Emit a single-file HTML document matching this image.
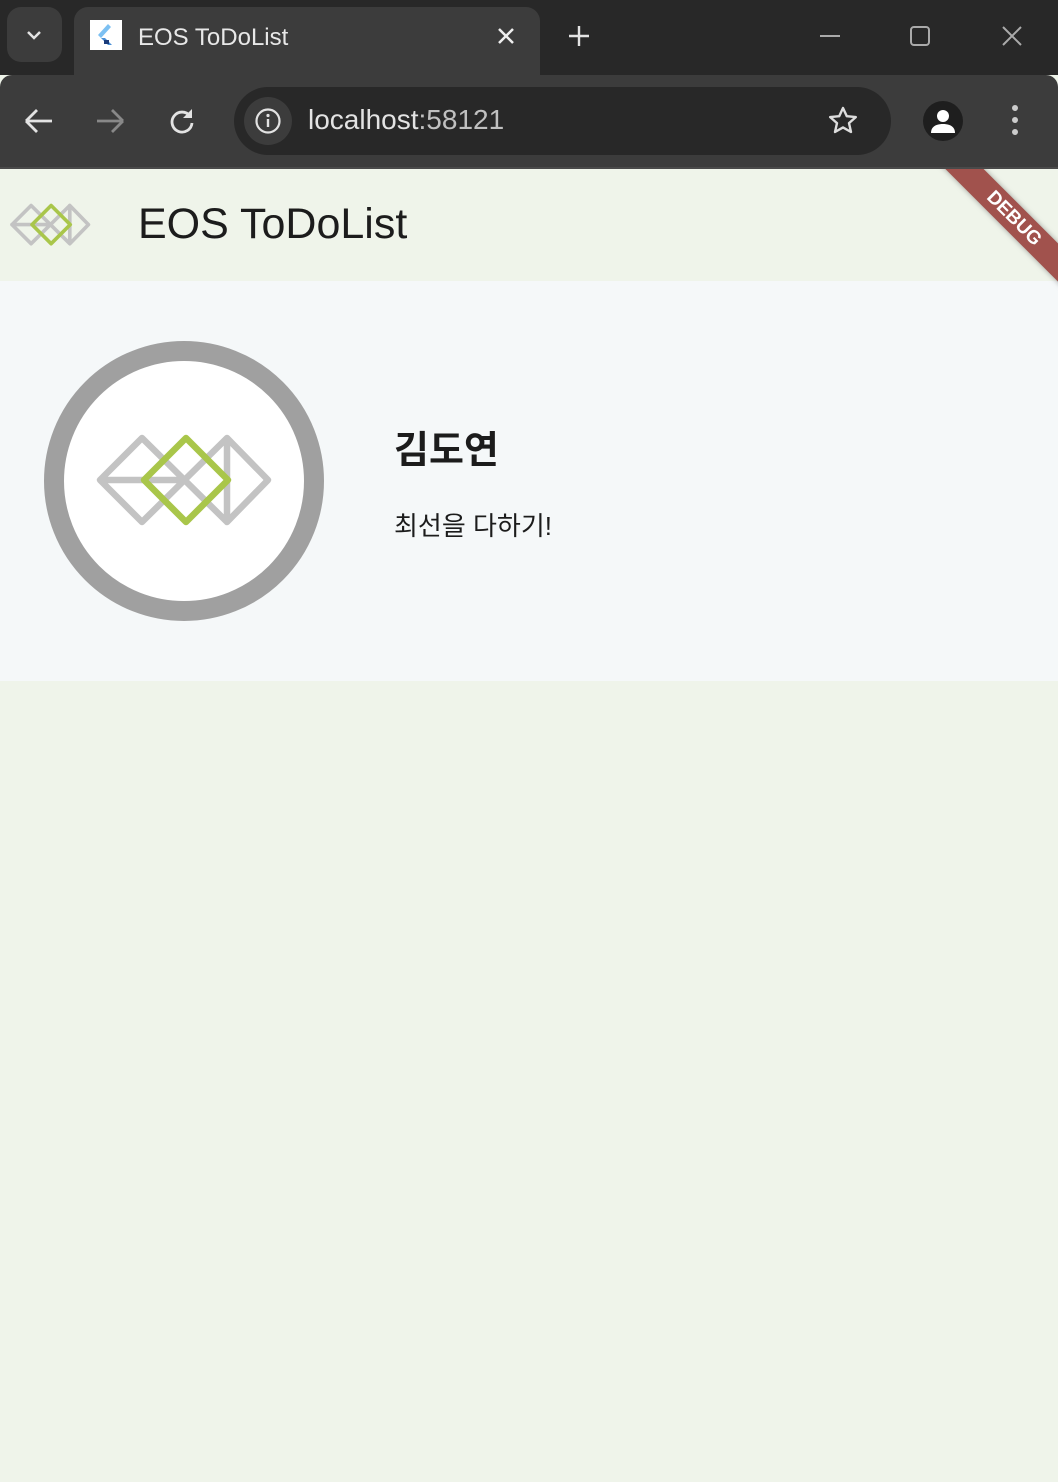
<!DOCTYPE html>
<html><head><meta charset="utf-8">
<style>
*{margin:0;padding:0;box-sizing:border-box}
body{width:1058px;height:1482px;overflow:hidden;background:#eff4ea;font-family:"Liberation Sans","Noto Sans CJK KR",sans-serif;position:relative}
.top{position:absolute;left:0;top:0;width:1058px;height:75px;background:#282828}
.tab{position:absolute;left:74px;top:7px;width:466px;height:70px;background:#3c3c3c;border-radius:14px 14px 0 0}
.tb{position:absolute;left:0;top:75px;width:1058px;height:92px;background:#3c3c3c;border-radius:12px 12px 0 0}
.line{position:absolute;left:0;top:167px;width:1058px;height:2px;background:#4a4a4a}
.url{position:absolute;left:234px;top:87px;width:657px;height:68px;background:#282828;border-radius:34px}
.txt{position:absolute;color:#e3e3e3;white-space:nowrap}
.appbar{position:absolute;left:0;top:169px;width:1058px;height:112px;background:#eff4ea}
.card{position:absolute;left:0;top:281px;width:1058px;height:400px;background:#f5f8f9}
.ring{position:absolute;left:44px;top:341px;width:280px;height:280px;border-radius:50%;border:20px solid #a0a0a0;background:#fff}
.clip{position:absolute;left:0;top:169px;width:1058px;height:200px;overflow:hidden;pointer-events:none}
.ribbon{position:absolute;left:914px;top:36px;width:200px;height:27px;background:#a1524d;transform-origin:center;transform:rotate(45deg);color:#fff;font-weight:bold;font-size:19px;text-align:center;line-height:27px;box-shadow:0 0 6px rgba(0,0,0,.35)}
</style></head><body>
<div class="top"></div>
<div style="position:absolute;left:7px;top:7px;width:55px;height:55px;background:#3c3c3c;border-radius:14px"></div>
<svg style="position:absolute;left:24px;top:27px" width="20" height="16"><path d="M4 5l6 6 6-6" stroke="#e3e3e3" stroke-width="2.5" fill="none"/></svg>
<div class="tab"></div>
<div style="position:absolute;left:90px;top:20px;width:32px;height:30px;background:#fff"></div>
<svg style="position:absolute;left:90px;top:20px" width="32" height="30"><path d="M18 4L8 15l3 3L21 7z" fill="#7cc0f2"/><path d="M11 18l7 7h4l-7-7" fill="#4a8fd6"/><rect x="14" y="20" width="5" height="4" fill="#1a3b7a"/></svg>
<div class="txt" style="left:138px;top:24px;font-size:24px;color:#e8e8e8;font-family:'Liberation Sans','DejaVu Sans',sans-serif">EOS ToDoList</div>
<svg style="position:absolute;left:496px;top:26px" width="20" height="20"><path d="M3 3l14 14M17 3L3 17" stroke="#eee" stroke-width="2.5"/></svg>
<svg style="position:absolute;left:566px;top:23px" width="26" height="26"><path d="M13 3v20M3 13h20" stroke="#e3e3e3" stroke-width="2.4"/></svg>
<svg style="position:absolute;left:818px;top:25px" width="230" height="24"><path d="M2 11h20" stroke="#aaa" stroke-width="2"/><rect x="93" y="2" width="18" height="18" rx="3" stroke="#aaa" stroke-width="2" fill="none"/><path d="M185 2l18 18M203 2l-18 18" stroke="#aaa" stroke-width="2"/></svg>
<div class="tb"></div>
<div class="line"></div>
<svg style="position:absolute;left:22px;top:105px" width="36" height="32"><path d="M4 16h26M4 16l11-11M4 16l11 11" stroke="#e3e3e3" stroke-width="2.8" fill="none"/></svg>
<svg style="position:absolute;left:93px;top:105px" width="36" height="32"><path d="M30 16H4M30 16L19 5M30 16L19 27" stroke="#888" stroke-width="2.8" fill="none"/></svg>
<svg style="position:absolute;left:166px;top:105px" width="32" height="32"><path d="M24 11A10 10 0 1 0 26 18" stroke="#e3e3e3" stroke-width="2.8" fill="none"/><path d="M26 4v9h-9z" fill="#e3e3e3"/></svg>
<div class="url"></div>
<div style="position:absolute;left:244px;top:97px;width:48px;height:48px;border-radius:50%;background:#3c3c3c"></div>
<svg style="position:absolute;left:254px;top:107px" width="28" height="28"><circle cx="14" cy="14" r="11.5" stroke="#e3e3e3" stroke-width="2.2" fill="none"/><path d="M14 12v8" stroke="#e3e3e3" stroke-width="2.4"/><circle cx="14" cy="8.5" r="1.6" fill="#e3e3e3"/></svg>
<div class="txt" style="left:308px;top:104px;font-size:28px">localhost<span style="color:#c0c0c0">:58121</span></div>
<svg style="position:absolute;left:826px;top:104px" width="34" height="34"><path d="M17 4l3.8 8.2 9 .9-6.8 6 2 8.9L17 23.4 9 28l2-8.9-6.8-6 9-.9z" stroke="#ddd" stroke-width="2.4" fill="none" stroke-linejoin="round"/></svg>
<div style="position:absolute;left:923px;top:101px;width:40px;height:40px;border-radius:50%;background:#1e1e1e"></div>
<svg style="position:absolute;left:923px;top:101px" width="40" height="40"><circle cx="20" cy="15" r="6" fill="#fff"/><path d="M8 32c0-7 6-9 12-9s12 2 12 9z" fill="#fff"/></svg>
<svg style="position:absolute;left:1008px;top:104px" width="14" height="34"><circle cx="7" cy="4" r="3" fill="#ccc"/><circle cx="7" cy="16" r="3" fill="#ccc"/><circle cx="7" cy="28" r="3" fill="#ccc"/></svg>

<div class="appbar"></div>
<svg style="position:absolute;left:0;top:169px" width="110" height="112">
<g transform="translate(12,36.5) scale(0.455)">
<path d="M0 42L42 0L127 84V0L168 42L127 84M0 42L42 84L127 0M0 42H85" stroke="#c3c3c3" stroke-width="8" fill="none" stroke-linejoin="round" stroke-linecap="round"/>
<path d="M86 0L128 42L86 84L44 42Z" stroke="#a9c64a" stroke-width="8" fill="none" stroke-linejoin="round"/>
</g></svg>
<div class="txt" style="left:138px;top:200px;font-size:43px;color:#1c1c1c">EOS ToDoList</div>
<div class="card"></div>
<div class="ring"></div>
<svg style="position:absolute;left:90px;top:430px" width="190" height="100">
<g transform="translate(10,8)">
<path d="M0 42L42 0L127 84V0L168 42L127 84M0 42L42 84L127 0M0 42H85" stroke="#c3c3c3" stroke-width="6.5" fill="none" stroke-linejoin="round" stroke-linecap="round"/>
<path d="M86 0L128 42L86 84L44 42Z" stroke="#a9c64a" stroke-width="6.5" fill="none" stroke-linejoin="round"/>
</g></svg>
<div class="txt" style="left:394px;top:419px;font-size:38px;font-weight:bold;color:#1c1c1c">김도연</div>
<div class="txt" style="left:394px;top:506px;font-size:26px;color:#1c1c1c">최선을 다하기!</div>
<div class="clip"><div class="ribbon">DEBUG</div></div>
</body></html>
